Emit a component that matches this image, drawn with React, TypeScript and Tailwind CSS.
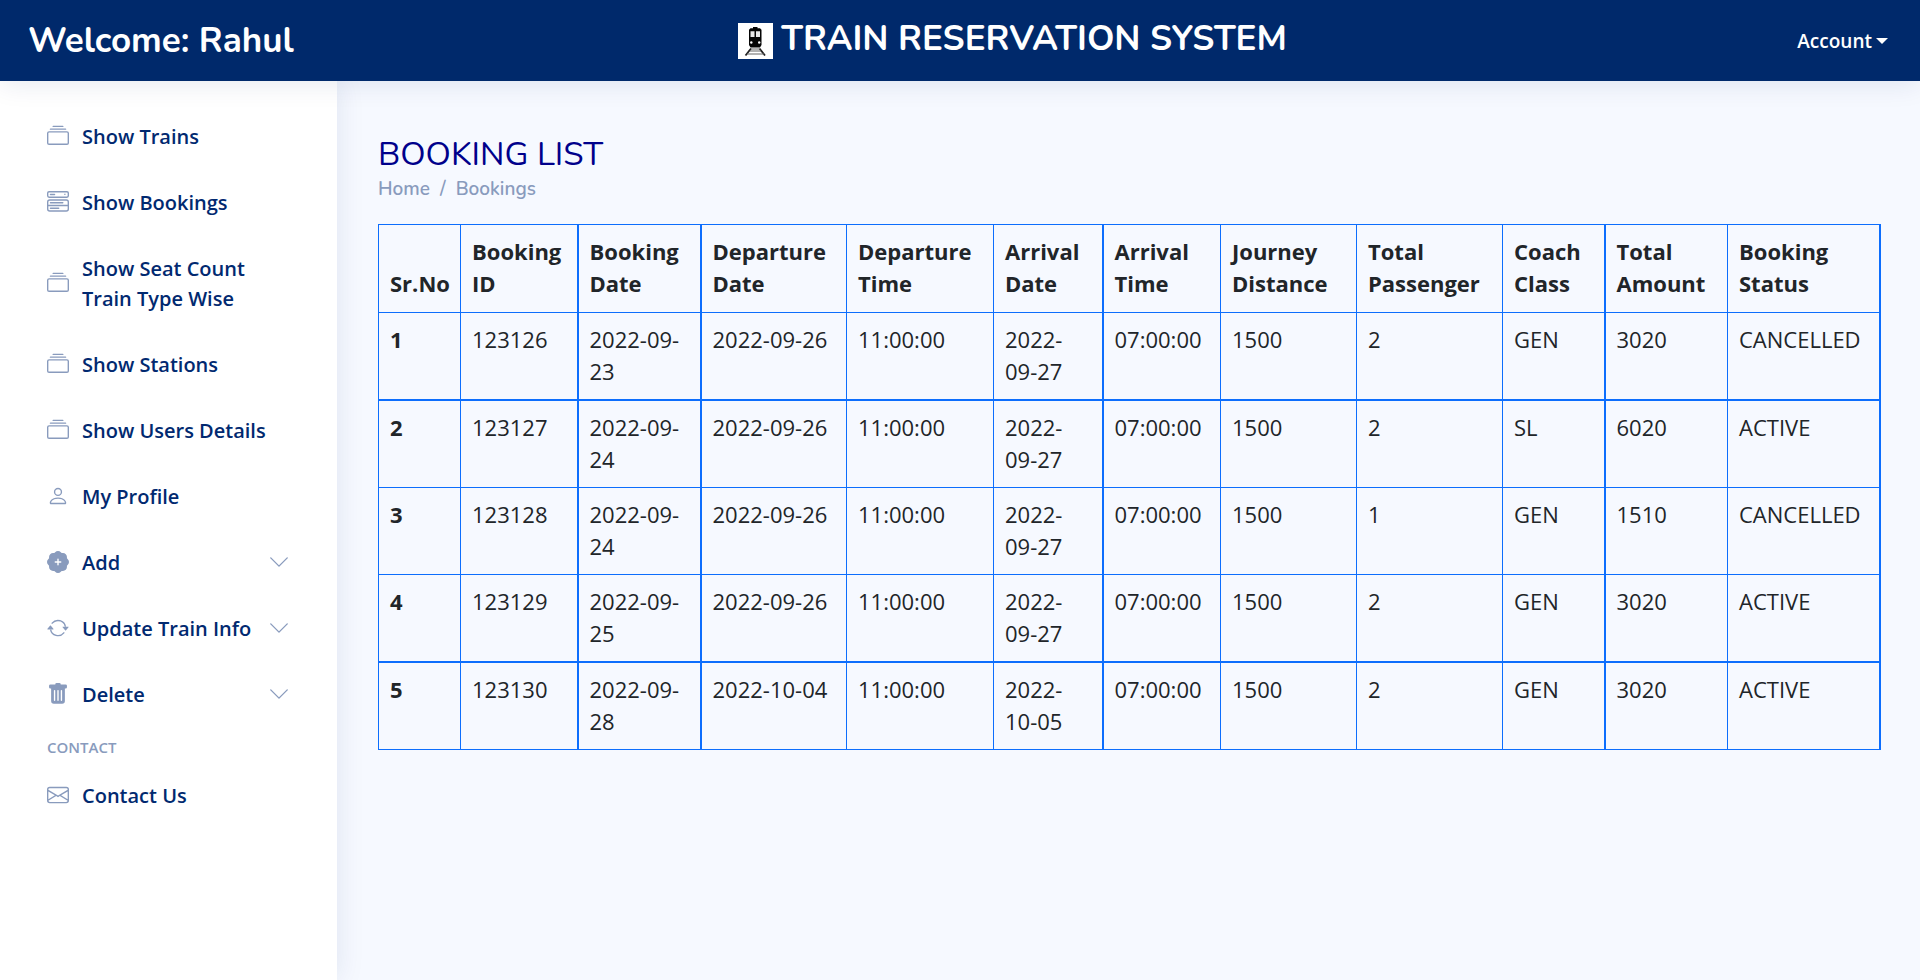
import type { ReactNode } from "react";
import type { IconType } from "react-icons";
import {
  BsArrowRepeat,
  BsChevronDown,
  BsCollection,
  BsEnvelope,
  BsMenuButtonWide,
  BsPatchPlusFill,
  BsPerson,
  BsTrashFill,
} from "react-icons/bs";

type NavEntry = { label: string; icon: IconType; expandable?: boolean };

const navEntries: NavEntry[] = [
  { label: "Show Trains", icon: BsCollection },
  { label: "Show Bookings", icon: BsMenuButtonWide },
  { label: "Show Seat Count Train Type Wise", icon: BsCollection },
  { label: "Show Stations", icon: BsCollection },
  { label: "Show Users Details", icon: BsCollection },
  { label: "My Profile", icon: BsPerson },
  { label: "Add", icon: BsPatchPlusFill, expandable: true },
  { label: "Update Train Info", icon: BsArrowRepeat, expandable: true },
  { label: "Delete", icon: BsTrashFill, expandable: true },
];

const columns = [
  { label: "Sr.No", width: "w-[82px]", edge: "border-r" },
  { label: "Booking ID", width: "w-[117px]", edge: "border-r-2" },
  { label: "Booking Date", width: "w-[123px]", edge: "border-r-2" },
  { label: "Departure Date", width: "w-[146px]", edge: "border-r" },
  { label: "Departure Time", width: "w-[147px]", edge: "border-r" },
  { label: "Arrival Date", width: "w-[109px]", edge: "border-r-2" },
  { label: "Arrival Time", width: "w-[118px]", edge: "border-r" },
  { label: "Journey Distance", width: "w-[136px]", edge: "border-r" },
  { label: "Total Passenger", width: "w-[146px]", edge: "border-r" },
  { label: "Coach Class", width: "w-[102px]", edge: "border-r-2" },
  { label: "Total Amount", width: "w-[123px]", edge: "border-r" },
  { label: "Booking Status", width: "w-[152px]", edge: "border-r-2" },
];

const rowEdges = ["border-b-2", "border-b", "border-b", "border-b-2", "border-b"];

const bookings = [
  ["123126", "2022-09-23", "2022-09-26", "11:00:00", "2022-09-27", "07:00:00", "1500", "2", "GEN", "3020", "CANCELLED"],
  ["123127", "2022-09-24", "2022-09-26", "11:00:00", "2022-09-27", "07:00:00", "1500", "2", "SL", "6020", "ACTIVE"],
  ["123128", "2022-09-24", "2022-09-26", "11:00:00", "2022-09-27", "07:00:00", "1500", "1", "GEN", "1510", "CANCELLED"],
  ["123129", "2022-09-25", "2022-09-26", "11:00:00", "2022-09-27", "07:00:00", "1500", "2", "GEN", "3020", "ACTIVE"],
  ["123130", "2022-09-28", "2022-10-04", "11:00:00", "2022-10-05", "07:00:00", "1500", "2", "GEN", "3020", "ACTIVE"],
];

function TrainLogo() {
  return (
    <svg viewBox="0 0 35 36" className="h-9 w-[35px] shrink-0" aria-hidden="true">
      <rect width="35" height="36" fill="#fff" />
      <path d="M15 4h4.500v1.200H22l1.500 1.500V22l-1.500 2.500h-9.500L11 22V6.700l1.500-1.500H15z" fill="#050505" />
      <path d="M12.500 8.200h4v5.800h-4zM18 8.200h4v5.800h-4z" fill="#e8e8e8" />
      <circle cx="13.300" cy="19.500" r="1.200" fill="#fff" />
      <circle cx="21.200" cy="19.500" r="1.200" fill="#fff" />
      <path d="M13 25.500 7.500 32.500M21.500 25.500l5.500 7" stroke="#222" strokeWidth="1.800" fill="none" />
      <path d="M13 26h8.500M12 28h11M9 31h17" stroke="#666" strokeWidth="1.200" fill="none" />
    </svg>
  );
}

function NavRow({ label, icon: Icon, expandable }: NavEntry) {
  const content: ReactNode = (
    <>
      <Icon className="mb-0.5 size-[22px] shrink-0 text-[#899bbd]" />
      <span className="flex-1">{label}</span>
      {expandable && <BsChevronDown className="mb-0.5 size-[22px] shrink-0 text-[#899bbd]" />}
    </>
  );
  const style =
    "flex w-full items-center gap-[13px] px-5 py-[14px] text-left text-[20px] leading-[30px] font-semibold text-[#012970]";
  return (
    <li className="mb-2">
      {expandable ? (
        <button type="button" className={style}>{content}</button>
      ) : (
        <a href="#" className={style}>{content}</a>
      )}
    </li>
  );
}

export default function App() {
  return (
    <div className="flex min-h-screen flex-col bg-[#f6f9ff] font-['Open_Sans',sans-serif] text-[#212529]">
      <header className="relative z-10 flex h-[81px] items-center justify-between bg-[#00296b] pr-8 pl-7 text-white shadow-[0_3px_27px_rgba(1,41,112,0.1)]">
        <span className="font-['Nunito',sans-serif] text-[35px] leading-[44px] font-bold">Welcome: Rahul</span>
        <div className="flex items-center gap-2 pr-[66px]">
          <TrainLogo />
          <h1 className="pb-1 font-['Nunito',sans-serif] text-[35px] leading-[44px] font-bold">TRAIN RESERVATION SYSTEM</h1>
        </div>
        <button type="button" className="flex items-center gap-1 text-[19px] leading-7 font-semibold">
          Account
          <svg viewBox="0 0 12 6" className="h-1.5 w-3" aria-hidden="true">
            <path d="M0 0h12L6 6z" fill="currentColor" />
          </svg>
        </button>
      </header>

      <div className="flex flex-1">
        <aside className="w-[337px] shrink-0 bg-white p-[27px] shadow-[0_0_27px_rgba(1,41,112,0.1)]">
          <nav>
            <ul>
              {navEntries.map((entry) => (
                <NavRow key={entry.label} {...entry} />
              ))}
              <li className="px-5 pt-1 pb-2 text-[15px] leading-[23px] font-semibold text-[#899bbd]">CONTACT</li>
              <NavRow label="Contact Us" icon={BsEnvelope} />
            </ul>
          </nav>
        </aside>

        <main className="min-w-0 flex-1 px-[41px] pt-[54px] pb-10">
          <h2 className="font-['Nunito',sans-serif] text-[33px] leading-10 text-[#00008b]">BOOKING LIST</h2>
          <nav aria-label="breadcrumb" className="font-['Nunito',sans-serif] text-[19px] leading-7 font-semibold text-[#899bbd]">
            <ol className="flex gap-[10px]">
              <li><a href="#">Home</a></li>
              <li aria-hidden="true">/</li>
              <li><a href="#">Bookings</a></li>
            </ol>
          </nav>

          <table className="mt-[21px] w-full table-fixed border-collapse border border-[#0d6efd] text-[22px] leading-8">
            <thead>
              <tr>
                {columns.map((column) => (
                  <th
                    key={column.label}
                    scope="col"
                    className={`${column.width} ${column.edge} border-b border-[#0d6efd] px-[11px] pt-[10px] pb-[13px] text-left align-bottom font-bold`}
                  >
                    {column.label}
                  </th>
                ))}
              </tr>
            </thead>
            <tbody>
              {bookings.map((booking, row) => (
                <tr key={booking[0]}>
                  <th
                    scope="row"
                    className={`${columns[0].edge} ${rowEdges[row]} border-[#0d6efd] px-[11px] pt-[10px] pb-3 text-left align-top font-bold`}
                  >
                    {row + 1}
                  </th>
                  {booking.map((value, index) => (
                    <td
                      key={index}
                      className={`${columns[index + 1].edge} ${rowEdges[row]} border-[#0d6efd] px-[11px] pt-[10px] pb-3 align-top`}
                    >
                      {value}
                    </td>
                  ))}
                </tr>
              ))}
            </tbody>
          </table>
        </main>
      </div>
    </div>
  );
}
